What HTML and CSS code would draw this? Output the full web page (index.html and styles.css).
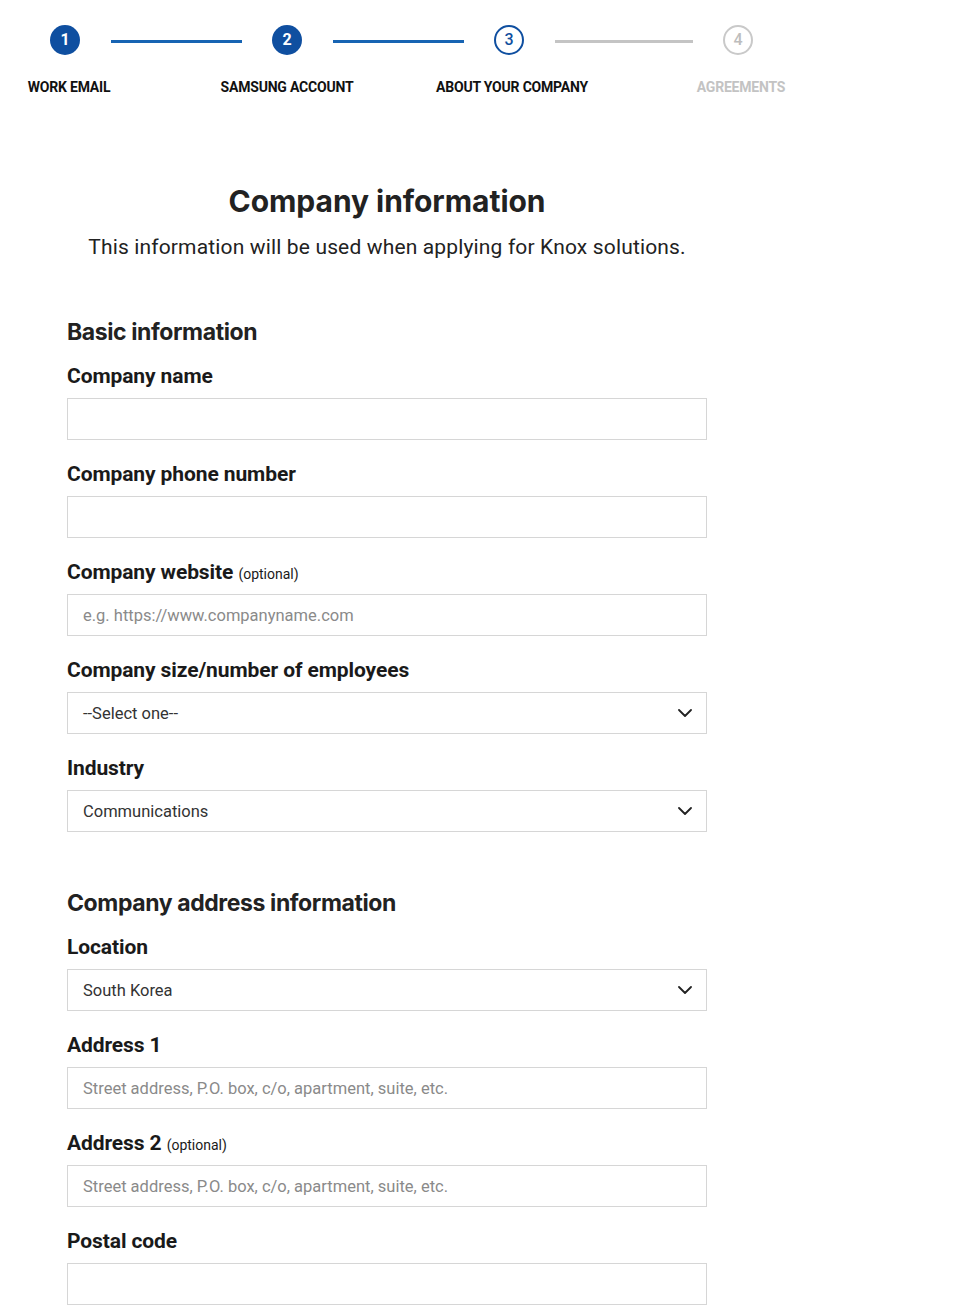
FILE: index.html
```html
<!DOCTYPE html>
<html lang="en">
<head>
<meta charset="utf-8">
<title>Company information</title>
<link rel="stylesheet" href="styles.css">
</head>
<body>
<nav class="stepper">
  <div class="circle done">1</div>
  <div class="bar active"></div>
  <div class="circle done">2</div>
  <div class="bar active"></div>
  <div class="circle current">3</div>
  <div class="bar idle wide"></div>
  <div class="circle todo">4</div>
  <div class="step-label c1">WORK EMAIL</div>
  <div class="step-label c3">SAMSUNG ACCOUNT</div>
  <div class="step-label c5">ABOUT YOUR COMPANY</div>
  <div class="step-label c7 muted">AGREEMENTS</div>
</nav>

<main class="content">
  <h1 class="title">Company information</h1>
  <p class="subtitle">This information will be used when applying for Knox solutions.</p>

  <section class="section">
    <h2 class="section-title">Basic information</h2>
    <div class="field">
      <label class="label">Company name</label>
      <input class="input" type="text">
    </div>
    <div class="field">
      <label class="label">Company phone number</label>
      <input class="input" type="text">
    </div>
    <div class="field">
      <label class="label">Company website <span class="opt">(optional)</span></label>
      <input class="input" type="text" placeholder="e.g. https://www.companyname.com">
    </div>
    <div class="field">
      <label class="label">Company size/number of employees</label>
      <div class="select"><span>--Select one--</span><svg class="chev" viewBox="0 0 14 8" width="14" height="8"><path d="M1 1l6 6 6-6" fill="none" stroke="#222" stroke-width="1.8" stroke-linecap="round" stroke-linejoin="round"/></svg></div>
    </div>
    <div class="field">
      <label class="label">Industry</label>
      <div class="select"><span>Communications</span><svg class="chev" viewBox="0 0 14 8" width="14" height="8"><path d="M1 1l6 6 6-6" fill="none" stroke="#222" stroke-width="1.8" stroke-linecap="round" stroke-linejoin="round"/></svg></div>
    </div>
  </section>

  <section class="section">
    <h2 class="section-title">Company address information</h2>
    <div class="field">
      <label class="label">Location</label>
      <div class="select"><span>South Korea</span><svg class="chev" viewBox="0 0 14 8" width="14" height="8"><path d="M1 1l6 6 6-6" fill="none" stroke="#222" stroke-width="1.8" stroke-linecap="round" stroke-linejoin="round"/></svg></div>
    </div>
    <div class="field">
      <label class="label">Address 1</label>
      <input class="input" type="text" placeholder="Street address, P.O. box, c/o, apartment, suite, etc.">
    </div>
    <div class="field">
      <label class="label">Address 2 <span class="opt">(optional)</span></label>
      <input class="input" type="text" placeholder="Street address, P.O. box, c/o, apartment, suite, etc.">
    </div>
    <div class="field">
      <label class="label">Postal code</label>
      <input class="input" type="text">
    </div>
  </section>
</main>
</body>
</html>
```

FILE: styles.css
```css
* { box-sizing: border-box; }
html, body { margin: 0; padding: 0; background: #fff; }
body { font-family: Roboto, "Liberation Sans", sans-serif; color: #1a1a1a; }

.stepper {
  display: grid;
  grid-template-columns: 30px 192px 30px 192px 30px 199px 30px;
  grid-template-rows: 30px auto;
  row-gap: 24px;
  padding: 25px 0 0 50px;
}
.circle {
  width: 30px; height: 30px; border-radius: 50%;
  display: flex; align-items: center; justify-content: center;
  font-size: 16px; font-weight: 700; line-height: 1;
}
.circle.done { background: #0f4fa0; color: #fff; }
.circle.current { border: 2px solid #0f4fa0; color: #0f4fa0; font-weight: 500; }
.circle.todo { border: 2px solid #c9c9c9; color: #bdbdbd; font-weight: 500; }
.bar { height: 3px; align-self: center; margin: 2px 30px 0 31px; }
.bar.active { background: #1764b3; }
.bar.idle { background: #c4c4c4; }
.step-label {
  grid-row: 2;
  justify-self: center;
  white-space: nowrap;
  font-size: 14px; line-height: 17px; font-weight: 700;
  letter-spacing: -0.2px;
  color: #111;
}
.step-label.c1 { grid-column: 1; margin-left: 8px; }
.step-label.c3 { grid-column: 3; }
.step-label.c5 { grid-column: 5; margin-left: 6px; }
.step-label.c7 { grid-column: 7; margin-left: 6px; }
.step-label.muted { color: #c3c3c3; }

.content { width: 640px; margin-left: 67px; }
.title {
  margin: 87px 0 0; text-align: center;
  font-family: Inter, "Open Sans", sans-serif;
  font-size: 30px; line-height: 36px; font-weight: 700;
  letter-spacing: -0.05px; color: #222;
}
.subtitle {
  margin: 15px 0 0; text-align: center;
  font-size: 21px; line-height: 26px; color: #222;
  letter-spacing: 0.15px;
}
.section { margin-top: 58px; }
.section + .section { margin-top: 57px; }
.section-title {
  margin: 0;
  font-family: Inter, "Open Sans", sans-serif;
  font-size: 23px; line-height: 28px; font-weight: 700;
  letter-spacing: -0.4px; color: #222;
}
.field { display: flex; flex-direction: column; margin-top: 22px; }
.section-title + .field { margin-top: 18px; }
.label {
  display: block;
  height: 24px;
  font-size: 21px; line-height: 24px; font-weight: 700;
  letter-spacing: -0.1px; color: #1a1a1a;
  margin-bottom: 10px;
  white-space: nowrap;
}
.opt { font-size: 14px; line-height: 0; font-weight: 400; letter-spacing: 0; }
.input, .select {
  width: 640px; height: 42px;
  border: 1px solid #d6d6d6; border-radius: 0;
  background: #fff;
  padding: 0 14px 0 15px;
  font-family: Roboto, "Liberation Sans", sans-serif;
  font-size: 16.5px; color: #333;
  outline: none;
  margin: 0;
}
.input::placeholder { color: #8a8a8a; }
.select { display: flex; align-items: center; justify-content: space-between; }
.select span { color: #333; }
.chev { display: block; }
```
